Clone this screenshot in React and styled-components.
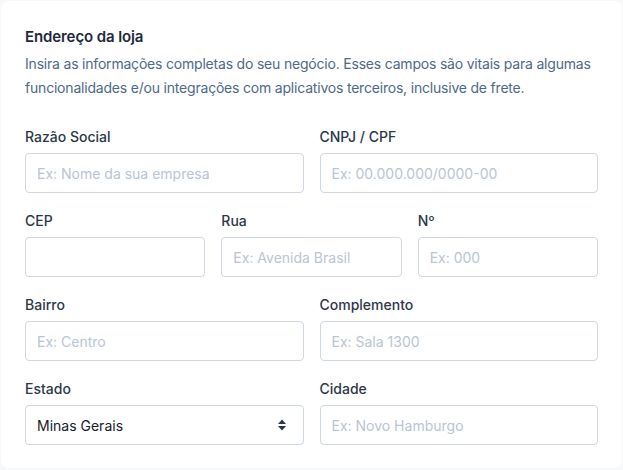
import React from 'react'
import styled, { createGlobalStyle } from 'styled-components'

const Global = createGlobalStyle`
    html, body {
        margin: 0;
        padding: 0;
        background: #f7f8fa;
        font-family: 'Inter', 'Noto Sans', sans-serif;
    }
    * { box-sizing: border-box; }
`

const Card = styled.section`
    width: 621px;
    margin: 1px;
    background: #ffffff;
    border-radius: 8px;
    padding: 24px 24px 23px;
`
const Title = styled.h2`
    margin: 0;
    font-size: 15px;
    line-height: 24px;
    font-weight: 600;
    color: #1e293b;
    letter-spacing: -0.1px;
`
const Description = styled.p`
    margin: 3px 0 0;
    font-size: 14px;
    line-height: 24px;
    color: #4e6988;
    letter-spacing: -0.2px;
`
const Form = styled.div`
    margin-top: 27px;
    display: flex;
    flex-direction: column;
    gap: 18px;
`
const Row = styled.div`
    display: grid;
    grid-template-columns: repeat(${p => p.cols}, 1fr);
    column-gap: 16px;
`
const Field = styled.label`
    display: flex;
    flex-direction: column;
    gap: 6px;
`
const Label = styled.span`
    font-size: 14px;
    line-height: 20px;
    font-weight: 500;
    color: #2d3748;
`
const Input = styled.input`
    height: 40px;
    width: 100%;
    border: 1px solid #cfd8e3;
    border-radius: 4px;
    padding: 0 11px;
    font-family: inherit;
    font-size: 14px;
    color: #1a202c;
    background: #fff;
    outline: none;
    &::placeholder {
        color: #b9c5d3;
    }
`
const SelectBox = styled.div`
    height: 40px;
    border: 1px solid #cfd8e3;
    border-radius: 4px;
    display: flex;
    align-items: center;
    justify-content: space-between;
    padding: 0 16px 0 11px;
    font-size: 14px;
    color: #1a202c;
`
const Arrows = styled.svg`
    width: 10px;
    height: 14px;
`

const SortIcon = () => (
    <Arrows viewBox="0 0 10 14">
        <path d="M5 1.5 L9 6 H1 Z" fill="#2d3748" />
        <path d="M5 12.5 L9 8 H1 Z" fill="#2d3748" />
    </Arrows>
)

const TextField = ({label, placeholder}) => (
    <Field>
        <Label>{label}</Label>
        <Input placeholder={placeholder} />
    </Field>
)

const App = () => (
    <>
        <Global />
        <Card>
            <Title>Endereço da loja</Title>
            <Description>
                Insira as informações completas do seu negócio. Esses campos são vitais para algumas
                funcionalidades e/ou integrações com aplicativos terceiros, inclusive de frete.
            </Description>
            <Form>
                <Row cols={2}>
                    <TextField label="Razão Social" placeholder="Ex: Nome da sua empresa" />
                    <TextField label="CNPJ / CPF" placeholder="Ex: 00.000.000/0000-00" />
                </Row>
                <Row cols={3}>
                    <TextField label="CEP" placeholder="" />
                    <TextField label="Rua" placeholder="Ex: Avenida Brasil" />
                    <TextField label="Nº" placeholder="Ex: 000" />
                </Row>
                <Row cols={2}>
                    <TextField label="Bairro" placeholder="Ex: Centro" />
                    <TextField label="Complemento" placeholder="Ex: Sala 1300" />
                </Row>
                <Row cols={2}>
                    <Field as="div">
                        <Label>Estado</Label>
                        <SelectBox>
                            <span>Minas Gerais</span>
                            <SortIcon />
                        </SelectBox>
                    </Field>
                    <TextField label="Cidade" placeholder="Ex: Novo Hamburgo" />
                </Row>
            </Form>
        </Card>
    </>
)

export default App
